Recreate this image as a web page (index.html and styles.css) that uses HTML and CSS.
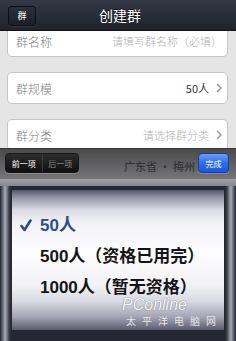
FILE: index.html
```html
<!DOCTYPE html>
<html lang="zh">
<head>
<meta charset="utf-8">
<title>创建群</title>
<link rel="stylesheet" href="styles.css">
</head>
<body>
<div class="phone">
  <header class="navbar">
    <button class="nav-btn">群</button>
    <h1 class="nav-title">创建群</h1>
    <span></span>
  </header>
  <main class="form">
    <div class="form-inner">
      <section class="group">
        <div class="row"><span class="label">群名称</span><span class="placeholder">请填写群名称（必填）</span></div>
      </section>
      <section class="group">
        <div class="row"><span class="label">群规模</span><span class="value">50人</span>
          <svg class="chev" viewBox="0 0 6 10" width="6" height="10"><path d="M1 1 L5 5 L1 9" fill="none" stroke="#9a9a9a" stroke-width="1.5"/></svg></div>
      </section>
      <section class="group">
        <div class="row"><span class="label">群分类</span><span class="placeholder">请选择群分类</span>
          <svg class="chev" viewBox="0 0 6 10" width="6" height="10"><path d="M1 1 L5 5 L1 9" fill="none" stroke="#9a9a9a" stroke-width="1.5"/></svg></div>
      </section>
    </div>
  </main>
  <div class="toolbar">
    <div class="seg"><span class="seg-item">前一项</span><span class="seg-item off">后一项</span></div>
    <span class="ghost">广东省 · 梅州</span>
    <button class="done">完成</button>
  </div>
  <div class="picker">
    <div class="picker-top"></div>
    <div class="picker-body">
      <div class="wheel">
        <div class="opt sel">
          <svg class="check" viewBox="0 0 12 13" width="12" height="13"><path d="M1.5 7 L4.5 11 L10.5 1.5" fill="none" stroke="#2f4c88" stroke-width="2.6" stroke-linecap="round" stroke-linejoin="round"/></svg>
          <span>50人</span>
        </div>
        <div class="opt"><span class="check"></span><span>500人（资格已用完）</span></div>
        <div class="opt"><span class="check"></span><span>1000人（暂无资格）</span></div>
      </div>
    </div>
  </div>
  <div class="watermark">
    <span class="wm-brand">PConline</span>
    <span class="wm-cn">太平洋电脑网</span>
  </div>
</div>
</body>
</html>
```
FILE: styles.css
```css
* { box-sizing: border-box; margin: 0; padding: 0; }
html, body { width: 236px; height: 341px; overflow: hidden; }
body {
  font-family: "Noto Sans CJK SC", "Liberation Sans", sans-serif;
  background: #1c2028;
}
.phone {
  width: 236px;
  height: 341px;
  display: flex;
  flex-direction: column;
  position: relative;
  overflow: hidden;
}
.navbar {
  height: 31px;
  flex: none;
  display: grid;
  grid-template-columns: 1fr auto 1fr;
  align-items: center;
  padding-left: 8px;
  background: linear-gradient(#333a45, #1e232b);
  border-bottom: 1px solid #10141a;
}
.nav-btn {
  width: 28px;
  height: 20px;
  border: 1px solid #0c0f13;
  border-radius: 3px;
  background: linear-gradient(#2a313b, #1a1f27);
  box-shadow: 0 1px 0 rgba(255,255,255,0.08);
  color: #fff;
  font-family: inherit;
  font-size: 9px;
  line-height: 18px;
}
.nav-title {
  font-size: 14px;
  font-weight: 400;
  color: #fff;
  text-shadow: 0 -1px 0 rgba(0,0,0,0.6);
  line-height: 31px;
  margin-right: 4px;
}
.form {
  height: 117px;
  flex: none;
  overflow: hidden;
  background: #e5e5e5;
}
.form-inner {
  margin-top: -6px;
  padding: 0 8px 0 7px;
  display: flex;
  flex-direction: column;
  gap: 15px;
}
.group {
  background: #fff;
  border: 1px solid #c6c6c6;
  border-radius: 5px;
}
.row {
  height: 30px;
  display: flex;
  align-items: center;
  padding: 0 5px 0 8px;
}
.label {
  flex: 1;
  font-size: 12px;
  font-weight: 300;
  color: #808080;
}
.placeholder {
  font-size: 11px;
  font-weight: 300;
  color: #b0b0b0;
}
.value {
  font-size: 11px;
  color: #3a3a3a;
}
.chev { margin-left: 7px; flex: none; }
.toolbar {
  height: 31px;
  flex: none;
  display: flex;
  align-items: flex-start;
  padding: 4px 7px 0 5px;
  background: linear-gradient(#4b4b4d, #616163 55%, #767678);
  border-top: 1px solid #383838;
}
.seg {
  display: flex;
  width: 74px;
  height: 20px;
  border-radius: 4px;
  border: 1px solid #151515;
  background: linear-gradient(#2e2e2e, #0f0f0f);
  box-shadow: 0 1px 0 rgba(255,255,255,0.2);
  overflow: hidden;
}
.seg-item {
  flex: 1;
  display: flex;
  align-items: center;
  justify-content: center;
  font-size: 8px;
  color: #fff;
}
.seg-item.off {
  color: #8c8c8c;
  border-left: 1px solid #3c3c3c;
}
.ghost {
  margin-left: auto;
  margin-right: 3px;
  margin-top: 5px;
  font-size: 11px;
  font-weight: 500;
  color: rgba(35,35,35,0.75);
  white-space: nowrap;
}
.done {
  width: 31px;
  height: 20px;
  border-radius: 4px;
  border: 1px solid #1d3f8f;
  background: linear-gradient(#6a9ef9, #2f6cee 50%, #1c57de);
  box-shadow: 0 1px 0 rgba(255,255,255,0.2);
  color: #fff;
  font-family: inherit;
  font-size: 8px;
}
.picker {
  flex: 1;
  display: flex;
  flex-direction: column;
}
.picker-top {
  height: 7px;
  flex: none;
  background: linear-gradient(#a2a3a8, #85868d);
}
.picker-body {
  flex: 1;
  display: flex;
  padding: 4px 12px 11px 12px;
  background:
    linear-gradient(to right, #1e2230 0, #3a3e4c 1px, #6e7280 3px, #a8aab4 5px, #7a7c88 7px, #3c3f4c 9px, #252834 11px, #252834 calc(100% - 11px), #3c3f4c calc(100% - 9px), #7a7c88 calc(100% - 7px), #a8aab4 calc(100% - 5px), #6e7280 calc(100% - 3px), #3a3e4c calc(100% - 1px), #1e2230 100%);
}
.wheel {
  flex: 1;
  padding-top: 20px;
  background: linear-gradient(#55566a 0%, #9a9bab 6%, #d9d9e3 14%, #f3f3f7 24%, #fdfdfe 45%, #f2f2f6 68%, #d7d7e1 80%, #a2a2b2 91%, #5a5b6c 100%);
}
.opt {
  height: 31px;
  display: flex;
  align-items: center;
  gap: 8px;
  padding-left: 8px;
  font-family: "Liberation Sans", "Noto Sans CJK SC", sans-serif;
  font-weight: 700;
  font-size: 17px;
  line-height: 20px;
  color: #151515;
  white-space: nowrap;
}
.opt.sel { color: #2f4c88; }
.check { width: 12px; flex: none; }
.watermark {
  position: absolute;
  left: 122px;
  top: 297px;
  display: flex;
  flex-direction: column;
  gap: 2px;
  color: #fff;
  pointer-events: none;
}
.wm-brand {
  font-family: "Liberation Sans", sans-serif;
  font-size: 16px;
  font-style: italic;
  line-height: 15px;
  opacity: 0.85;
  text-shadow: 0 0 1px #7a7a8e, 0 0 1px #7a7a8e;
}
.wm-cn {
  font-size: 10px;
  letter-spacing: 6px;
  line-height: 14px;
  margin-left: 4px;
  opacity: 0.8;
  text-shadow: 0 0 1px #7a7a8e;
}
```
